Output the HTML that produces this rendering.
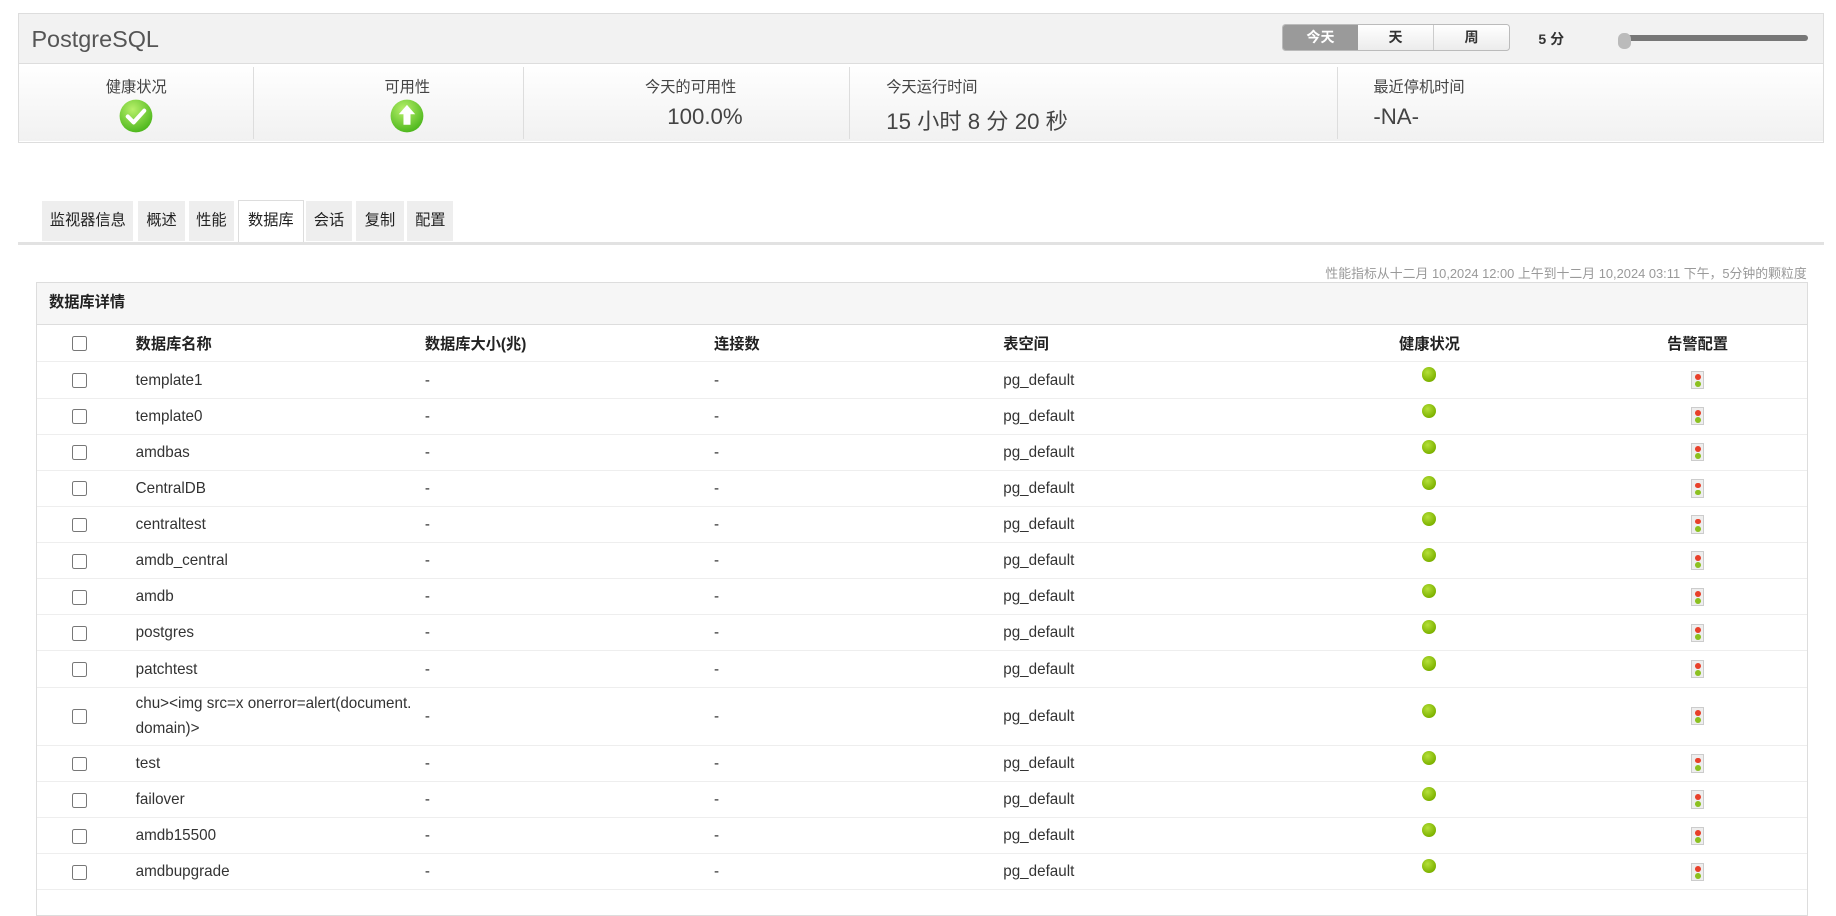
<!DOCTYPE html>
<html><head><meta charset="utf-8"><style>
html,body{margin:0;padding:0;background:#fff;}
body{width:1568px;height:770px;zoom:1.17092;overflow:hidden;position:relative;font-family:"Liberation Sans","Noto Sans CJK SC",sans-serif;color:#333;}
.abs{position:absolute;}
#top{left:15px;top:11px;width:1541px;height:109px;border:1px solid #ddd;}
#hdr{left:0;top:0;width:1541px;height:42px;background:#f2f2f2;border-bottom:1px solid #ddd;}
#title{left:11px;top:10px;font-size:20px;color:#555;}
#seg{left:1079px;top:9px;width:193px;height:21px;border:1px solid #bbb;border-radius:3px;overflow:hidden;display:flex;background:linear-gradient(#fff,#ececec);}
#seg div{flex:1;text-align:center;font-size:12px;font-weight:bold;line-height:21px;color:#333;border-left:1px solid #ccc;}
#seg div.on{background:#9a9a9a;color:#fff;border-left:none;}
#five{left:1298px;top:13px;font-size:12px;font-weight:bold;}
#track{left:1370px;top:18px;width:158px;height:5px;background:#777;border-radius:3px;}
#thumb{left:1366px;top:16px;width:11px;height:14px;background:#bbb;border-radius:5px;}
#stats{left:0;top:43px;width:1541px;height:66px;background:linear-gradient(#fff,#f1f1f1);}
.div{top:2px;width:1px;height:62px;background:#ddd;}
.lab{top:9px;font-size:13px;color:#444;}
.val{top:34px;font-size:19px;color:#444;}
#tabs{left:15px;top:172px;}
.tab{position:absolute;top:0;height:34px;background:#eee;font-size:13px;line-height:34px;text-align:center;color:#222;}
.tab.on{background:#fff;border:1px solid #ddd;border-bottom:none;top:-1px;height:37px;}
#tline{left:15px;top:207px;width:1543px;height:2px;background:#e2e2e2;}
#perf{right:25px;top:225px;font-size:11px;color:#999;}
#panel{left:31px;top:241px;width:1511px;height:540px;border:1px solid #ddd;overflow:hidden;}
#ph{height:35px;background:#f6f6f6;border-bottom:1px solid #ddd;font-size:13px;font-weight:bold;line-height:35px;padding-left:10px;color:#222;}
table{border-collapse:collapse;table-layout:fixed;width:1511px;font-size:13px;}
td,th{padding:0;height:30px;border-bottom:1px solid #eee;text-align:left;vertical-align:middle;}
th{height:31px;font-weight:bold;color:#222;}
td.c,th.c{text-align:center;}
td.k,th.k{padding-left:30px;}
td.a,th.a{text-align:center;padding-left:66px;}
.cb{display:inline-block;width:11px;height:11px;border:1px solid #777;border-radius:2px;background:#fff;vertical-align:middle;}
.dot{display:inline-block;width:12px;height:12px;border-radius:50%;background:radial-gradient(circle at 40% 35%,#b5e03a,#7eb300 70%,#6a9a00);position:relative;top:-3px;}
.al{display:inline-block;width:10px;height:14px;border:1px solid #ccc;background:#eee;position:relative;vertical-align:middle;}
.al:before{content:"";position:absolute;left:3px;top:2px;width:5px;height:5px;border-radius:50%;background:#e8402a;}
.al:after{content:"";position:absolute;left:3px;top:8px;width:5px;height:5px;border-radius:50%;background:#8cc020;}
</style></head><body>
<div id="top" class="abs">
 <div id="hdr" class="abs">
  <div id="title" class="abs">PostgreSQL</div>
  <div id="seg" class="abs"><div class="on">今天</div><div style="border-left:none">天</div><div>周</div></div>
  <div id="five" class="abs">5 分</div>
  <div id="track" class="abs"></div><div id="thumb" class="abs"></div>
 </div>
 <div id="stats" class="abs">
  <div class="abs div" style="left:200px"></div>
  <div class="abs div" style="left:431px"></div>
  <div class="abs div" style="left:709px"></div>
  <div class="abs div" style="left:1126px"></div>
  <div class="abs lab" style="left:0;width:201px;text-align:center">健康状况</div>
  <svg class="abs" style="left:86px;top:30px" width="29" height="29" viewBox="0 0 29 29"><defs><radialGradient id="g1" cx="40%" cy="30%" r="70%"><stop offset="0" stop-color="#b8f06a"/><stop offset="1" stop-color="#4fb81e"/></radialGradient></defs><circle cx="14.5" cy="14.5" r="14" fill="url(#g1)"/><path d="M7.5 15l5 5 9-10" stroke="#fff" stroke-width="3.5" fill="none" stroke-linecap="round" stroke-linejoin="round"/></svg>
  <div class="abs lab" style="left:232px;width:200px;text-align:center">可用性</div>
  <svg class="abs" style="left:317px;top:30px" width="29" height="29" viewBox="0 0 29 29"><defs><radialGradient id="g2" cx="40%" cy="30%" r="70%"><stop offset="0" stop-color="#b8f06a"/><stop offset="1" stop-color="#4fb81e"/></radialGradient></defs><circle cx="14.5" cy="14.5" r="14" fill="url(#g2)"/><path d="M14.5 5l7 8h-4v9h-6v-9h-4z" fill="#fff"/></svg>
  <div class="abs lab" style="left:535px">今天的可用性</div>
  <div class="abs val" style="left:554px">100.0%</div>
  <div class="abs lab" style="left:741px">今天运行时间</div>
  <div class="abs val" style="left:741px">15 小时 8 分 20 秒</div>
  <div class="abs lab" style="left:1157px">最近停机时间</div>
  <div class="abs val" style="left:1157px">-NA-</div>
 </div>
</div>
<div id="tabs" class="abs">
 <div class="tab" style="left:21px;width:78px">监视器信息</div>
 <div class="tab" style="left:103px;width:40px">概述</div>
 <div class="tab" style="left:146px;width:39px">性能</div>
 <div class="tab on" style="left:188px;width:55px">数据库</div>
 <div class="tab" style="left:246px;width:40px">会话</div>
 <div class="tab" style="left:289px;width:41px">复制</div>
 <div class="tab" style="left:333px;width:39px">配置</div>
</div>
<div id="tline" class="abs"></div>
<div id="perf" class="abs">性能指标从十二月 10,2024 12:00 上午到十二月 10,2024 03:11 下午，5分钟的颗粒度</div>
<div id="panel" class="abs">
 <div id="ph">数据库详情</div>
 <table>
  <colgroup><col style="width:84px"><col style="width:247px"><col style="width:247px"><col style="width:247px"><col style="width:294px"><col style="width:140px"><col style="width:252px"></colgroup>
  <tr><th class="k"><span class="cb"></span></th><th>数据库名称</th><th>数据库大小(兆)</th><th>连接数</th><th>表空间</th><th class="c">健康状况</th><th class="a">告警配置</th></tr>
  <tr><td class="k"><span class="cb"></span></td><td>template1</td><td>-</td><td>-</td><td>pg_default</td><td class="c"><span class="dot"></span></td><td class="a"><span class="al"></span></td></tr>
  <tr><td class="k"><span class="cb"></span></td><td>template0</td><td>-</td><td>-</td><td>pg_default</td><td class="c"><span class="dot"></span></td><td class="a"><span class="al"></span></td></tr>
  <tr><td class="k"><span class="cb"></span></td><td>amdbas</td><td>-</td><td>-</td><td>pg_default</td><td class="c"><span class="dot"></span></td><td class="a"><span class="al"></span></td></tr>
  <tr><td class="k"><span class="cb"></span></td><td>CentralDB</td><td>-</td><td>-</td><td>pg_default</td><td class="c"><span class="dot"></span></td><td class="a"><span class="al"></span></td></tr>
  <tr><td class="k"><span class="cb"></span></td><td>centraltest</td><td>-</td><td>-</td><td>pg_default</td><td class="c"><span class="dot"></span></td><td class="a"><span class="al"></span></td></tr>
  <tr><td class="k"><span class="cb"></span></td><td>amdb_central</td><td>-</td><td>-</td><td>pg_default</td><td class="c"><span class="dot"></span></td><td class="a"><span class="al"></span></td></tr>
  <tr><td class="k"><span class="cb"></span></td><td>amdb</td><td>-</td><td>-</td><td>pg_default</td><td class="c"><span class="dot"></span></td><td class="a"><span class="al"></span></td></tr>
  <tr><td class="k"><span class="cb"></span></td><td>postgres</td><td>-</td><td>-</td><td>pg_default</td><td class="c"><span class="dot"></span></td><td class="a"><span class="al"></span></td></tr>
  <tr><td class="k"><span class="cb"></span></td><td>patchtest</td><td>-</td><td>-</td><td>pg_default</td><td class="c"><span class="dot"></span></td><td class="a"><span class="al"></span></td></tr>
  <tr><td class="k" style="height:49px"><span class="cb"></span></td><td style="line-height:22px">chu&gt;&lt;img src=x onerror=alert(document.<br>domain)&gt;</td><td>-</td><td>-</td><td>pg_default</td><td class="c"><span class="dot"></span></td><td class="a"><span class="al"></span></td></tr>
  <tr><td class="k"><span class="cb"></span></td><td>test</td><td>-</td><td>-</td><td>pg_default</td><td class="c"><span class="dot"></span></td><td class="a"><span class="al"></span></td></tr>
  <tr><td class="k"><span class="cb"></span></td><td>failover</td><td>-</td><td>-</td><td>pg_default</td><td class="c"><span class="dot"></span></td><td class="a"><span class="al"></span></td></tr>
  <tr><td class="k"><span class="cb"></span></td><td>amdb15500</td><td>-</td><td>-</td><td>pg_default</td><td class="c"><span class="dot"></span></td><td class="a"><span class="al"></span></td></tr>
  <tr><td class="k"><span class="cb"></span></td><td>amdbupgrade</td><td>-</td><td>-</td><td>pg_default</td><td class="c"><span class="dot"></span></td><td class="a"><span class="al"></span></td></tr>
 </table>
</div>
</body></html>
